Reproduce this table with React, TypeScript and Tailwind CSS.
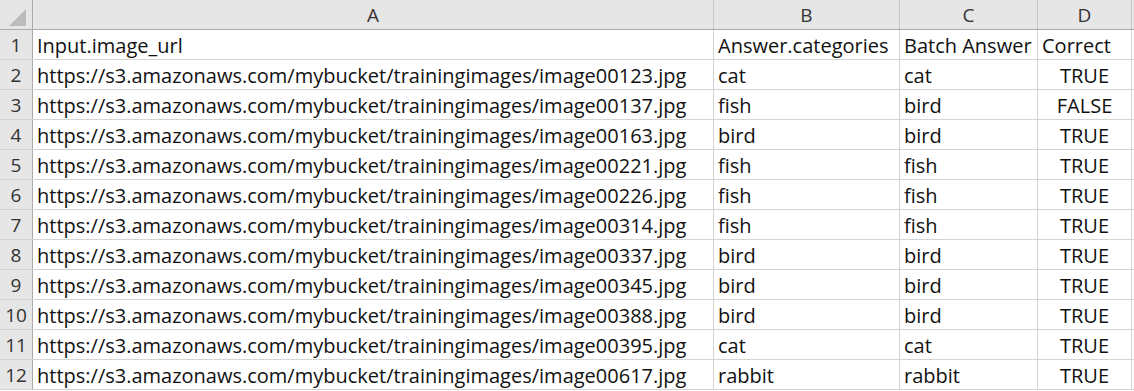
import React from 'react';

const rows: [string, string, string, string][] = [
  ['Input.image_url', 'Answer.categories', 'Batch Answer', 'Correct'],
  ['https://s3.amazonaws.com/mybucket/trainingimages/image00123.jpg', 'cat', 'cat', 'TRUE'],
  ['https://s3.amazonaws.com/mybucket/trainingimages/image00137.jpg', 'fish', 'bird', 'FALSE'],
  ['https://s3.amazonaws.com/mybucket/trainingimages/image00163.jpg', 'bird', 'bird', 'TRUE'],
  ['https://s3.amazonaws.com/mybucket/trainingimages/image00221.jpg', 'fish', 'fish', 'TRUE'],
  ['https://s3.amazonaws.com/mybucket/trainingimages/image00226.jpg', 'fish', 'fish', 'TRUE'],
  ['https://s3.amazonaws.com/mybucket/trainingimages/image00314.jpg', 'fish', 'fish', 'TRUE'],
  ['https://s3.amazonaws.com/mybucket/trainingimages/image00337.jpg', 'bird', 'bird', 'TRUE'],
  ['https://s3.amazonaws.com/mybucket/trainingimages/image00345.jpg', 'bird', 'bird', 'TRUE'],
  ['https://s3.amazonaws.com/mybucket/trainingimages/image00388.jpg', 'bird', 'bird', 'TRUE'],
  ['https://s3.amazonaws.com/mybucket/trainingimages/image00395.jpg', 'cat', 'cat', 'TRUE'],
  ['https://s3.amazonaws.com/mybucket/trainingimages/image00617.jpg', 'rabbit', 'rabbit', 'TRUE'],
];

// grid: row header | A | B | C | D | rest
const cols = 'grid grid-cols-[33px_681px_186px_138px_94px_1fr]';

const App: React.FC = () => {
  return (
    <div className="w-[1134px] h-[391px] bg-white overflow-hidden text-[#111] font-['Open_Sans',sans-serif] text-[20px] leading-none">
      {/* column headers */}
      <div className={`${cols} h-[30px] bg-[#e6e6e6] border-b border-[#ababab] text-[#333]`}>
        <div className="relative border-r border-[#ababab]">
          <svg className="absolute right-[6px] bottom-[3px]" width="17" height="17" viewBox="0 0 17 17">
            <polygon points="17,0 17,17 0,17" fill="#bcbcbc" />
          </svg>
        </div>
        {['A', 'B', 'C', 'D'].map((c) => (
          <div key={c} className="flex items-center justify-center pt-[2px] border-r border-[#c8c8c8] text-[19px]">
            {c}
          </div>
        ))}
        <div />
      </div>

      {rows.map((r, i) => (
        <div key={i} className={`${cols} h-[30px] border-b border-[#d4d4d4]`}>
          <div className="flex items-center justify-center pt-[2px] bg-[#e6e6e6] border-r border-[#ababab] text-[#333] text-[19px]">
            {i + 1}
          </div>
          <div className="flex items-center pt-[2px] pl-[4px] border-r border-[#d4d4d4] whitespace-nowrap">{r[0]}</div>
          <div className="flex items-center pt-[2px] pl-[4px] border-r border-[#d4d4d4] whitespace-nowrap">{r[1]}</div>
          <div className="flex items-center pt-[2px] pl-[4px] border-r border-[#d4d4d4] whitespace-nowrap">{r[2]}</div>
          <div
            className={`flex items-center pt-[2px] border-r border-[#d4d4d4] whitespace-nowrap ${
              i === 0 ? 'pl-[4px]' : 'justify-center'
            }`}
          >
            {r[3]}
          </div>
          <div />
        </div>
      ))}
    </div>
  );
};

export default App;
